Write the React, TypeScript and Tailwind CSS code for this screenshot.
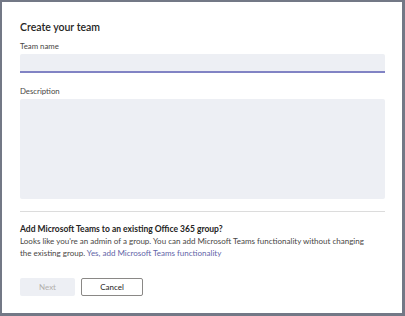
export default function App() {
  return (
    <div className="w-[405px] h-[316px] bg-white border-t-2 border-l-2 border-r-[3px] border-b-[3px] border-[#737886] box-border" style={{ fontFamily: "Lato, 'Open Sans', sans-serif" }}>
      <div className="pl-[18px] pr-[17px] pt-[18px] flex flex-col">
        <div className="text-[10.5px] leading-[14px] font-semibold text-[#252423]">Create your team</div>
        <div className="mt-[7px] text-[7.8px] leading-[10px] text-[#484644]">Team name</div>
        <div className="mt-[3px] h-[19px] bg-[#edeff4] border-b-2 border-[#8183c4] rounded-t-[2px]"></div>
        <div className="mt-[13px] text-[7.8px] leading-[10px] text-[#484644]">Description</div>
        <div className="mt-[3px] h-[100px] bg-[#edeff4] rounded-[2px]"></div>
        <div className="mt-[12px] h-px bg-[#dcdcdc]"></div>
        <div className="mt-[11px] text-[8.5px] leading-[12px] font-bold text-[#252423]">Add Microsoft Teams to an existing Office 365 group?</div>
        <div className="w-[352px] text-[8px] leading-[12px] text-[#484644]">
          Looks like you're an admin of a group. You can add Microsoft Teams functionality without changing the existing group. <span className="text-[#6264a7]">Yes, add Microsoft Teams functionality</span>
        </div>
        <div className="mt-[19px] flex gap-[6px]">
          <div className="w-[55px] h-[18px] bg-[#edeff4] rounded-[2px] flex items-center justify-center text-[8px] text-[#b3b0ad]">Next</div>
          <div className="w-[62px] h-[18px] bg-white border border-[#8a8886] rounded-[2px] flex items-center justify-center text-[8px] text-[#252423]">Cancel</div>
        </div>
      </div>
    </div>
  );
}
